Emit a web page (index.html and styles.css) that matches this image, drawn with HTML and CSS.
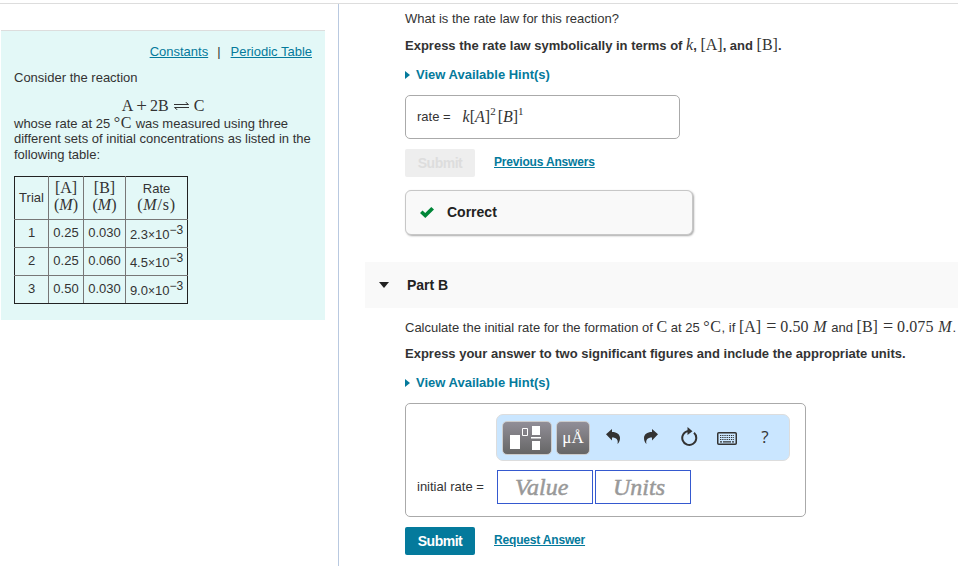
FILE: index.html
```html
<!DOCTYPE html>
<html lang="en">
<head>
    <meta charset="UTF-8">
    <meta name="viewport" content="width=device-width, initial-scale=1.0">
    <title>Rate Law</title>
    <link rel="stylesheet" href="styles.css">
</head>
<body>
    <div class="page">
        <div class="sidebar">
            <div class="intro">
                <div class="links">
                    <a href="#">Constants</a><span class="divider">|</span><a href="#">Periodic Table</a>
                </div>
                <p class="lead">Consider the reaction</p>
                <p class="equation math">
                    <span>A</span><span class="plus">+</span><span>2B</span>
                    <svg class="arrows" width="15" height="8" viewBox="0 0 15 8" fill="none" stroke="#333" stroke-width="1">
                        <path d="M0 2.5h14.5L11.5 0M15 5.5H.5L3.5 8"/>
                    </svg>
                    <span>C</span>
                </p>
                <p class="description">
                    <span class="line">whose rate at 25 <span class="math unit">°C</span> was measured using three</span>
                    <span class="line">different sets of initial concentrations as listed in the</span>
                    <span class="line">following table:</span>
                </p>
                <table class="data">
                    <tr class="head">
                        <td class="trial">Trial</td>
                        <td class="conc-a"><span class="math">[A]</span><br><span class="math">(<i>M</i>)</span></td>
                        <td class="conc-b"><span class="math">[B]</span><br><span class="math">(<i>M</i>)</span></td>
                        <td class="rate">Rate<br><span class="math per">(<i>M</i>/s)</span></td>
                    </tr>
                    <tr><td>1</td><td>0.25</td><td>0.030</td><td class="power">2.3<span class="times">×</span>10<sup>−3</sup></td></tr>
                    <tr><td>2</td><td>0.25</td><td>0.060</td><td class="power">4.5<span class="times">×</span>10<sup>−3</sup></td></tr>
                    <tr><td>3</td><td>0.50</td><td>0.030</td><td class="power">9.0<span class="times">×</span>10<sup>−3</sup></td></tr>
                </table>
            </div>
        </div>

        <div class="main">
            <div class="part part-a">
                <p class="question">What is the rate law for this reaction?</p>
                <p class="instruction">Express the rate law symbolically in terms of <span class="math"><i>k</i></span>, <span class="math">[A]</span>, and <span class="math">[B]</span>.</p>
                <a class="hint" href="#">View Available Hint(s)</a>
                <div class="answer">
                    <span>rate =</span>
                    <span class="math formula"><i>k</i>[<i>A</i>]<sup>2</sup><span class="second">[<i>B</i>]</span><sup>1</sup></span>
                </div>
                <div class="actions">
                    <button class="submit" disabled>Submit</button>
                    <a href="#">Previous Answers</a>
                </div>
                <div class="feedback">
                    <svg width="14" height="11" viewBox="0 0 14 11">
                        <path d="M0 6L2.5 3.4 5.2 6 11.3 0 14 2.5 5.3 11z" fill="#008638"/>
                    </svg>
                    <span>Correct</span>
                </div>
            </div>

            <div class="part-title">
                <span class="caret"></span>
                <h2>Part B</h2>
            </div>

            <div class="part part-b">
                <p class="question">Calculate the initial rate for the formation of <span class="math">C</span> at 25 <span class="math unit">°C</span>, if <span class="math">[A]</span><span class="math equals">=</span><span class="math num">0.50</span> <span class="math molar">M</span> and <span class="math">[B]</span><span class="math equals">=</span><span class="math num">0.075</span> <span class="math molar">M</span>.</p>
                <p class="instruction">Express your answer to two significant figures and include the appropriate units.</p>
                <a class="hint" href="#">View Available Hint(s)</a>
                <div class="entry">
                    <div class="toolbar">
                        <button class="tool templates">
                            <svg width="32" height="26" viewBox="0 0 32 26">
                                <path d="M0 10h10v14H0zM22 1h8v9h-8zM22 16h8v9h-8zM21 12h10v1.5H21z" fill="#fff"/>
                                <path d="M12.5 3.5h5v7h-5z" fill="none" stroke="#fff"/>
                            </svg>
                        </button>
                        <button class="tool symbols">μÅ</button>
                        <div class="icons">
                            <svg width="14" height="15" viewBox="0 0 14 15" fill="#333">
                                <path d="M0 5.2L6 0v3c5 0 8 2.5 8 6.2 0 2.4-1 4.4-2.5 5.8 1-3.8-.8-6.4-5.5-6.4v3z"/>
                            </svg>
                            <svg width="14" height="15" viewBox="0 0 14 15" fill="#333">
                                <path d="M14 5.2L8 0v3C3 3 0 5.5 0 9.2 0 11.6 1 13.6 2.5 15 1.5 11.2 3.3 8.6 8 8.6v3z"/>
                            </svg>
                            <svg width="18" height="19" viewBox="0 0 18 19">
                                <path d="M14 5.8A7 7 0 1 1 8.5 4" fill="none" stroke="#333" stroke-width="2"/>
                                <path d="M7.5 0l5 4.2-5 3.8z" fill="#333"/>
                            </svg>
                            <svg class="keyboard" width="20" height="13" viewBox="0 0 20 13" fill="none" stroke="#333">
                                <rect x=".75" y=".75" width="18.5" height="11.5" rx="1" stroke-width="1.5"/>
                                <path d="M3 3.5h14M3 5.5h14M3 7.5h14" stroke-dasharray="1.3 .9"/>
                                <path d="M3 9.8h2M6 9.8h8M15 9.8h2" stroke-width="1.2"/>
                            </svg>
                            <span class="help">?</span>
                        </div>
                    </div>
                    <div class="fields">
                        <label for="value">initial rate =</label>
                        <input type="text" id="value" placeholder="Value">
                        <input type="text" id="units" placeholder="Units">
                    </div>
                </div>
                <div class="actions">
                    <button class="submit">Submit</button>
                    <a href="#">Request Answer</a>
                </div>
            </div>
        </div>
    </div>
</body>
</html>
```
FILE: styles.css
```css
* {
    box-sizing: border-box;
}

body {
    margin: 0;
    padding-top: 3px;
    height: 566px;
    overflow: hidden;
    background: #fff;
    color: #333;
    font: 13px/16px "Liberation Sans", Arial, sans-serif;
}

p {
    margin: 0;
    white-space: nowrap;
}

a {
    color: #047a9c;
}

.page {
    display: flex;
    height: 563px;
    border-top: 1px solid #ddd;
}

.math {
    font-family: "Liberation Serif", "Times New Roman", serif;
    font-size: 16px;
    font-weight: normal;
    line-height: 16px;
}

/* left column */
.sidebar {
    flex: none;
    width: 339px;
    padding: 26px 13px 0 1px;
    border-right: 1px solid #b9c9e0;
}

.intro {
    height: 290px;
    padding: 13px 13px 0;
    border-top: 1px solid #ddd;
    background: #e3f8f7;
}

.links {
    text-align: right;
}

.divider {
    margin: 0 10px 0 9px;
}

.lead {
    margin-top: 10px;
}

.equation {
    display: flex;
    justify-content: center;
    align-items: center;
    margin-top: 12px;
}

.plus {
    margin: 0 3px;
    font-size: 19px;
}

.arrows {
    margin: 0 5px;
}

.description {
    margin-top: 1px;
}

.line {
    display: block;
    height: 16px;
}

.line:first-child {
    line-height: 15px;
}

.unit {
    letter-spacing: .6px;
}

.data {
    width: 174px;
    margin-top: 13px;
    border: 1px solid #222;
    border-collapse: collapse;
    table-layout: fixed;
}

.data td {
    height: 28px;
    padding: 0 0 2px;
    border: 1px solid #777;
    text-align: center;
}

.data tr td:first-child {
    border-left-color: #222;
}

.data tr td:last-child {
    border-right-color: #222;
}

.data tr:first-child td {
    border-top-color: #222;
}

.data tr:last-child td {
    border-bottom-color: #222;
}

.data .head td {
    height: 43px;
}

.data .head .trial {
    width: 34px;
    padding: 0;
}

.conc-a {
    width: 35px;
}

.conc-b {
    width: 42px;
}

.per {
    letter-spacing: .8px;
}

.data .power {
    padding: 2px 0 0;
}

.times {
    font-size: 12px;
}

sup {
    font-size: 12px;
    line-height: 0;
    vertical-align: 5px;
}

/* right column */
.main {
    flex: 1;
    min-width: 0;
    padding-left: 26px;
}

.part {
    padding-left: 40px;
}

.part-a {
    height: 258px;
    padding-top: 7px;
}

.instruction {
    margin-top: 10px;
    font-weight: bold;
}

.hint {
    display: flex;
    align-items: center;
    margin-top: 13px;
    font-weight: bold;
    text-decoration: none;
}

.hint::before {
    content: "";
    margin: 0 6px 0 0;
    border-left: 5px solid #047a9c;
    border-top: 4px solid transparent;
    border-bottom: 4px solid transparent;
}

.answer {
    display: flex;
    align-items: center;
    width: 275px;
    height: 44px;
    margin-top: 12px;
    padding-left: 11px;
    border: 1px solid #aaa;
    border-radius: 5px;
}

.formula {
    margin-left: 12px;
}

.formula sup {
    font-size: 11px;
    vertical-align: 7px;
}

.second {
    margin-left: 2px;
}

.actions {
    display: flex;
    align-items: center;
    margin-top: 10px;
    font-size: 12px;
    font-weight: bold;
    letter-spacing: -.18px;
}

.actions a {
    margin-top: -2px;
}

.submit {
    width: 70px;
    height: 28px;
    margin-right: 19px;
    padding: 0;
    border: none;
    border-radius: 2px;
    background: #047a9c;
    color: #fff;
    font: bold 14px "Liberation Sans", Arial, sans-serif;
    letter-spacing: -.5px;
}

.submit:disabled {
    background: #eee;
    color: #ddd;
}

.feedback {
    display: flex;
    align-items: center;
    width: 288px;
    height: 45px;
    margin-top: 13px;
    padding: 0 0 1px 14px;
    border: 1px solid #c7c7c7;
    border-radius: 6px;
    background: #f9f9f9;
    box-shadow: 1px 1px 2px #aaa;
    color: #222;
    font-size: 14px;
    font-weight: bold;
}

.feedback span {
    margin-left: 13px;
}

.part-title {
    display: flex;
    align-items: center;
    height: 46px;
    padding-left: 14px;
    background: #f9f9f9;
    color: #222;
}

.caret {
    border-top: 6px solid #222;
    border-left: 5.5px solid transparent;
    border-right: 5.5px solid transparent;
}

h2 {
    margin: 0 0 0 18px;
    font-size: 14px;
}

.part-b {
    padding-top: 11px;
}

.equals {
    margin: 0 4px 0 5px;
    font-size: 18px;
    line-height: 0;
}

.num {
    letter-spacing: .1px;
}

.molar {
    margin-left: 1px;
    font-style: italic;
    letter-spacing: 1px;
}

.entry {
    width: 401px;
    height: 114px;
    margin-top: 12px;
    padding: 10px 0 0 11px;
    border: 1px solid #aaa;
    border-radius: 5px;
}

.toolbar {
    display: flex;
    align-items: center;
    width: 294px;
    height: 47px;
    margin-left: 79px;
    padding-left: 5px;
    border: 1px solid #ddd;
    border-radius: 7px;
    background: #cae6ff;
}

.tool {
    display: flex;
    align-items: center;
    justify-content: center;
    height: 34px;
    margin: 0 4px 0 0;
    padding: 0;
    border: 1px solid #ccc;
    border-radius: 5px;
    background: linear-gradient(#918e97, #666);
    color: #fff;
}

.templates {
    width: 50px;
    padding-right: 3px;
}

.symbols {
    width: 34px;
    font: 17px "Liberation Serif", serif;
}

.icons {
    display: grid;
    grid-template-columns: repeat(5, 38px);
    align-items: center;
    justify-items: center;
    padding-bottom: 2px;
}

.keyboard {
    margin-top: 4px;
}

.help {
    font: 17px "Open Sans", sans-serif;
}

.fields {
    display: flex;
    align-items: center;
    margin-top: 9px;
}

.fields label {
    width: 80px;
}

.fields input {
    width: 96px;
    height: 34px;
    margin: 0 2px 0 0;
    padding: 0 0 0 17px;
    border: 1px solid #3559cf;
    font: italic 24px "Liberation Serif", "Times New Roman", serif;
}

.fields input::placeholder {
    color: #999;
    -webkit-text-stroke: .5px #999;
}
```
